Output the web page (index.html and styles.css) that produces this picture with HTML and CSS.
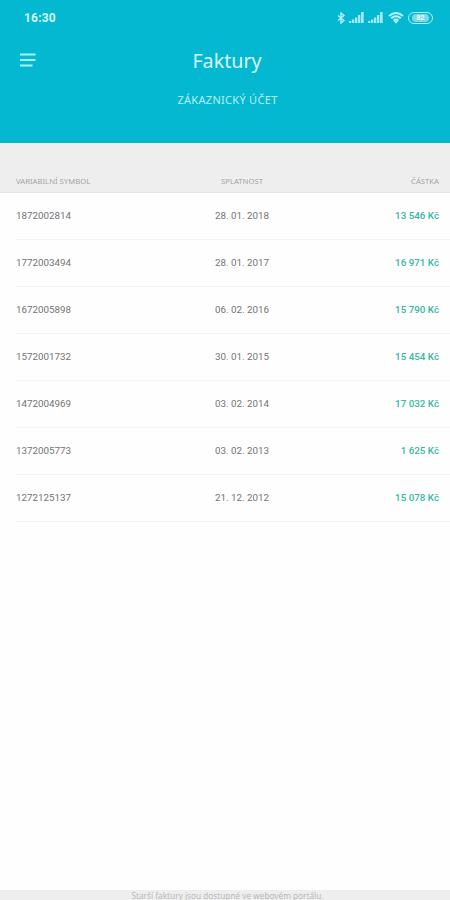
FILE: index.html
```html
<!DOCTYPE html>
<html lang="cs">
<head>
<meta charset="utf-8">
<title>Faktury</title>
<link rel="stylesheet" href="styles.css">
</head>
<body>
<header class="top">
  <div class="status">
    <span class="time">16:30</span>
    <div class="status-icons">
      <svg class="bluetooth" width="8" height="12" viewBox="0 0 8 12"><path d="M1 3.5l6 5-3 2.500V1l3 2.500-6 5"/></svg>
      <svg class="signal" width="15" height="11" viewBox="0 0 15 11"><path d="M0 9h2.300v2H0zM3 7.500h2.300V11H3zM6 5.500h2.300V11H6zM9 3h2.300v8H9zM12 0h2.700v11H12z"/></svg>
      <svg class="signal" width="15" height="11" viewBox="0 0 15 11"><path d="M0 9h2.300v2H0zM3 7.500h2.300V11H3zM6 5.500h2.300V11H6zM9 3h2.300v8H9zM12 0h2.700v11H12z"/></svg>
      <svg class="wifi" width="16" height="12" viewBox="0 0 16 12"><path d="M1 4q7-6 14 0M3.200 6.300q4.800-4 9.600 0M5.500 8.500q2.500-2 5 0"/><path class="dot" d="M5.500 8.800h5L8 11.800z"/></svg>
      <span class="battery"><span class="charge">82</span></span>
    </div>
  </div>
  <nav class="bar">
    <svg class="menu" width="16" height="14" viewBox="0 0 16 14"><path d="M0 1.500h15.500M0 7h15.500M0 12.500h12.500"/></svg>
    <h1>Faktury</h1>
  </nav>
  <p class="account">ZÁKAZNICKÝ ÚČET</p>
</header>
<main>
  <div class="row head"><span>VARIABILNÍ SYMBOL</span><span>SPLATNOST</span><span>ČÁSTKA</span></div>
  <div class="row"><span>1872002814</span><span>28. 01. 2018</span><span class="amount">13 546 Kč</span></div>
  <div class="row"><span>1772003494</span><span>28. 01. 2017</span><span class="amount">16 971 Kč</span></div>
  <div class="row"><span>1672005898</span><span>06. 02. 2016</span><span class="amount">15 790 Kč</span></div>
  <div class="row"><span>1572001732</span><span>30. 01. 2015</span><span class="amount">15 454 Kč</span></div>
  <div class="row"><span>1472004969</span><span>03. 02. 2014</span><span class="amount">17 032 Kč</span></div>
  <div class="row"><span>1372005773</span><span>03. 02. 2013</span><span class="amount">1 625 Kč</span></div>
  <div class="row"><span>1272125137</span><span>21. 12. 2012</span><span class="amount">15 078 Kč</span></div>
</main>
<footer>Starší faktury jsou dostupné ve webovém portálu.</footer>
</body>
</html>
```
FILE: styles.css
```css
* { box-sizing: border-box; }
body {
  margin: 0;
  height: 900px;
  display: flex;
  flex-direction: column;
  overflow: hidden;
  background: #fefefe;
  color: #747474;
  font-family: Roboto, "Noto Sans", sans-serif;
}
.top {
  height: 143px;
  flex: none;
  background: #04b8d2;
  color: #d5f7fa;
}
.status {
  height: 35px;
  padding: 0 17px 0 24px;
  display: flex;
  align-items: center;
  justify-content: space-between;
}
.time { font-size: 12px; font-weight: 700; letter-spacing: 0.2px; }
.status-icons { display: flex; align-items: center; height: 12px; }
.bluetooth { fill: none; stroke: #b5eff5; stroke-width: 1.4; margin-right: 4px; }
.signal { fill: #a5e9f0; margin-right: 4px; }
.wifi { fill: none; stroke: #b5eff5; stroke-width: 2; margin: 0 4px 0 1px; }
.wifi .dot { fill: #b5eff5; stroke: none; }
.battery {
  width: 25px;
  height: 12px;
  padding: 1px 3px;
  border: 1px solid #b5eff5;
  border-radius: 6px;
  display: flex;
}
.charge {
  flex: 1;
  border-radius: 4px;
  background: #76dce8;
  color: #effdfd;
  font-size: 7px;
  font-weight: 700;
  line-height: 8px;
  text-align: center;
}
.bar {
  height: 49px;
  padding: 0 20px;
  display: grid;
  grid-template-columns: 16px 1fr 16px;
  align-items: center;
}
.menu { fill: none; stroke: #a9f1f5; stroke-width: 1.8; }
h1 {
  margin: 2px 0 0 4px;
  font: 400 19.7px/28px "Noto Sans", sans-serif;
  text-align: center;
}
.account {
  margin: 7px 0 0 5px;
  font: 400 11px/18px "Noto Sans", sans-serif;
  letter-spacing: 0.3px;
  text-align: center;
  color: #b4f0f5;
}
main { flex: 1; }
.row {
  height: 47px;
  margin-left: 16px;
  padding: 0 11px 1px 0;
  display: grid;
  grid-template-columns: 150px 1fr 150px;
  align-items: center;
  border-bottom: 1px solid #f4f4f4;
  font-size: 9.8px;
}
.row span:nth-child(2) { text-align: center; padding-left: 29px; }
.row span:nth-child(3) { text-align: right; }
.row .amount { color: #36b7a5; font-weight: 500; }
.row.head {
  height: 50px;
  margin: 0;
  padding: 0 11px 6px 16px;
  align-items: end;
  background: #eeeeee;
  border-color: #e6e6e6;
  color: #a4a4a4;
  font: 400 7.7px/10px "Noto Sans", sans-serif;
}
footer {
  height: 10px;
  flex: none;
  padding-left: 5px;
  background: #eeeeee;
  color: #b9b9b9;
  font: 400 8.25px/11px "Noto Sans", sans-serif;
  text-align: center;
}
```
